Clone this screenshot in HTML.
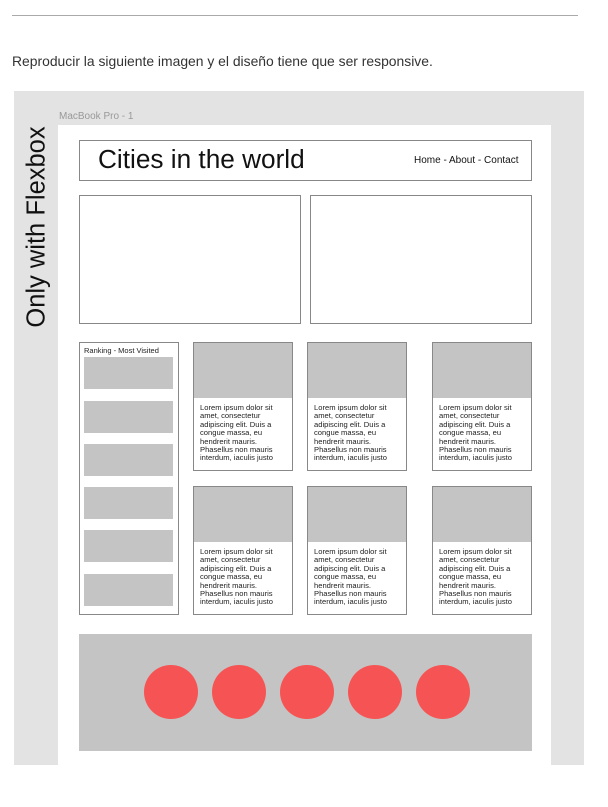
<!DOCTYPE html>
<html><head><meta charset="utf-8"><style>
*{margin:0;padding:0;box-sizing:border-box}
body{width:608px;height:807px;background:#fff;position:relative;font-family:"Liberation Sans",sans-serif;overflow:hidden}
.a{position:absolute}
.b{position:absolute;border:1px solid #888;background:#fff}
.g{position:absolute;background:#c4c4c4}
.card{position:absolute;border:1px solid #888;background:#fff;width:100px;height:129px}
.card .img{height:55px;background:#c4c4c4}
.card p{font-size:7.6px;line-height:8.4px;color:#222;padding:6px 5px 0 6px}
.c{position:absolute;width:54px;height:54px;border-radius:50%;background:#f65454;top:665px}
</style></head><body>
<div class="a" style="left:12px;top:15px;width:566px;height:1px;background:#aaa"></div>
<div class="a" style="left:12px;top:53px;font-size:13.9px;color:#333">Reproducir la siguiente imagen y el diseño tiene que ser responsive.</div>
<div class="a" style="left:14px;top:91px;width:570px;height:674px;background:#e3e3e3"></div>
<div class="a" style="left:58px;top:125px;width:493px;height:640px;background:#fff"></div>
<div class="a" style="left:59px;top:111px;font-size:10px;color:#999">MacBook Pro - 1</div>
<div class="a" style="left:37px;top:227px;transform:translate(-50%,-50%) rotate(-90deg);font-size:25.5px;color:#111;white-space:nowrap">Only with Flexbox</div>
<div class="b" style="left:79px;top:140px;width:453px;height:41px"></div>
<div class="a" style="left:98px;top:144px;font-size:26.2px;color:#111">Cities in the world</div>
<div class="a" style="left:414px;top:155px;font-size:10px;color:#111">Home - About - Contact</div>
<div class="b" style="left:79px;top:195px;width:222px;height:129px"></div>
<div class="b" style="left:310px;top:195px;width:222px;height:129px"></div>
<div class="b" style="left:79px;top:342px;width:100px;height:273px"></div>
<div class="a" style="left:84px;top:346px;font-size:7.5px;color:#222">Ranking - Most Visited</div>
<div class="g" style="left:84px;top:357px;width:89px;height:32px"></div>
<div class="g" style="left:84px;top:401px;width:89px;height:32px"></div>
<div class="g" style="left:84px;top:444px;width:89px;height:32px"></div>
<div class="g" style="left:84px;top:487px;width:89px;height:32px"></div>
<div class="g" style="left:84px;top:530px;width:89px;height:32px"></div>
<div class="g" style="left:84px;top:574px;width:89px;height:32px"></div>
<div class="card" style="left:193px;top:342px"><div class="img"></div><p>Lorem ipsum dolor sit amet, consectetur adipiscing elit. Duis a congue massa, eu hendrerit mauris. Phasellus non mauris interdum, iaculis justo</p></div>
<div class="card" style="left:307px;top:342px"><div class="img"></div><p>Lorem ipsum dolor sit amet, consectetur adipiscing elit. Duis a congue massa, eu hendrerit mauris. Phasellus non mauris interdum, iaculis justo</p></div>
<div class="card" style="left:432px;top:342px"><div class="img"></div><p>Lorem ipsum dolor sit amet, consectetur adipiscing elit. Duis a congue massa, eu hendrerit mauris. Phasellus non mauris interdum, iaculis justo</p></div>
<div class="card" style="left:193px;top:486px"><div class="img"></div><p>Lorem ipsum dolor sit amet, consectetur adipiscing elit. Duis a congue massa, eu hendrerit mauris. Phasellus non mauris interdum, iaculis justo</p></div>
<div class="card" style="left:307px;top:486px"><div class="img"></div><p>Lorem ipsum dolor sit amet, consectetur adipiscing elit. Duis a congue massa, eu hendrerit mauris. Phasellus non mauris interdum, iaculis justo</p></div>
<div class="card" style="left:432px;top:486px"><div class="img"></div><p>Lorem ipsum dolor sit amet, consectetur adipiscing elit. Duis a congue massa, eu hendrerit mauris. Phasellus non mauris interdum, iaculis justo</p></div>
<div class="g" style="left:79px;top:634px;width:453px;height:117px"></div>
<div class="c" style="left:144px"></div>
<div class="c" style="left:212px"></div>
<div class="c" style="left:280px"></div>
<div class="c" style="left:348px"></div>
<div class="c" style="left:416px"></div>
</body></html>
